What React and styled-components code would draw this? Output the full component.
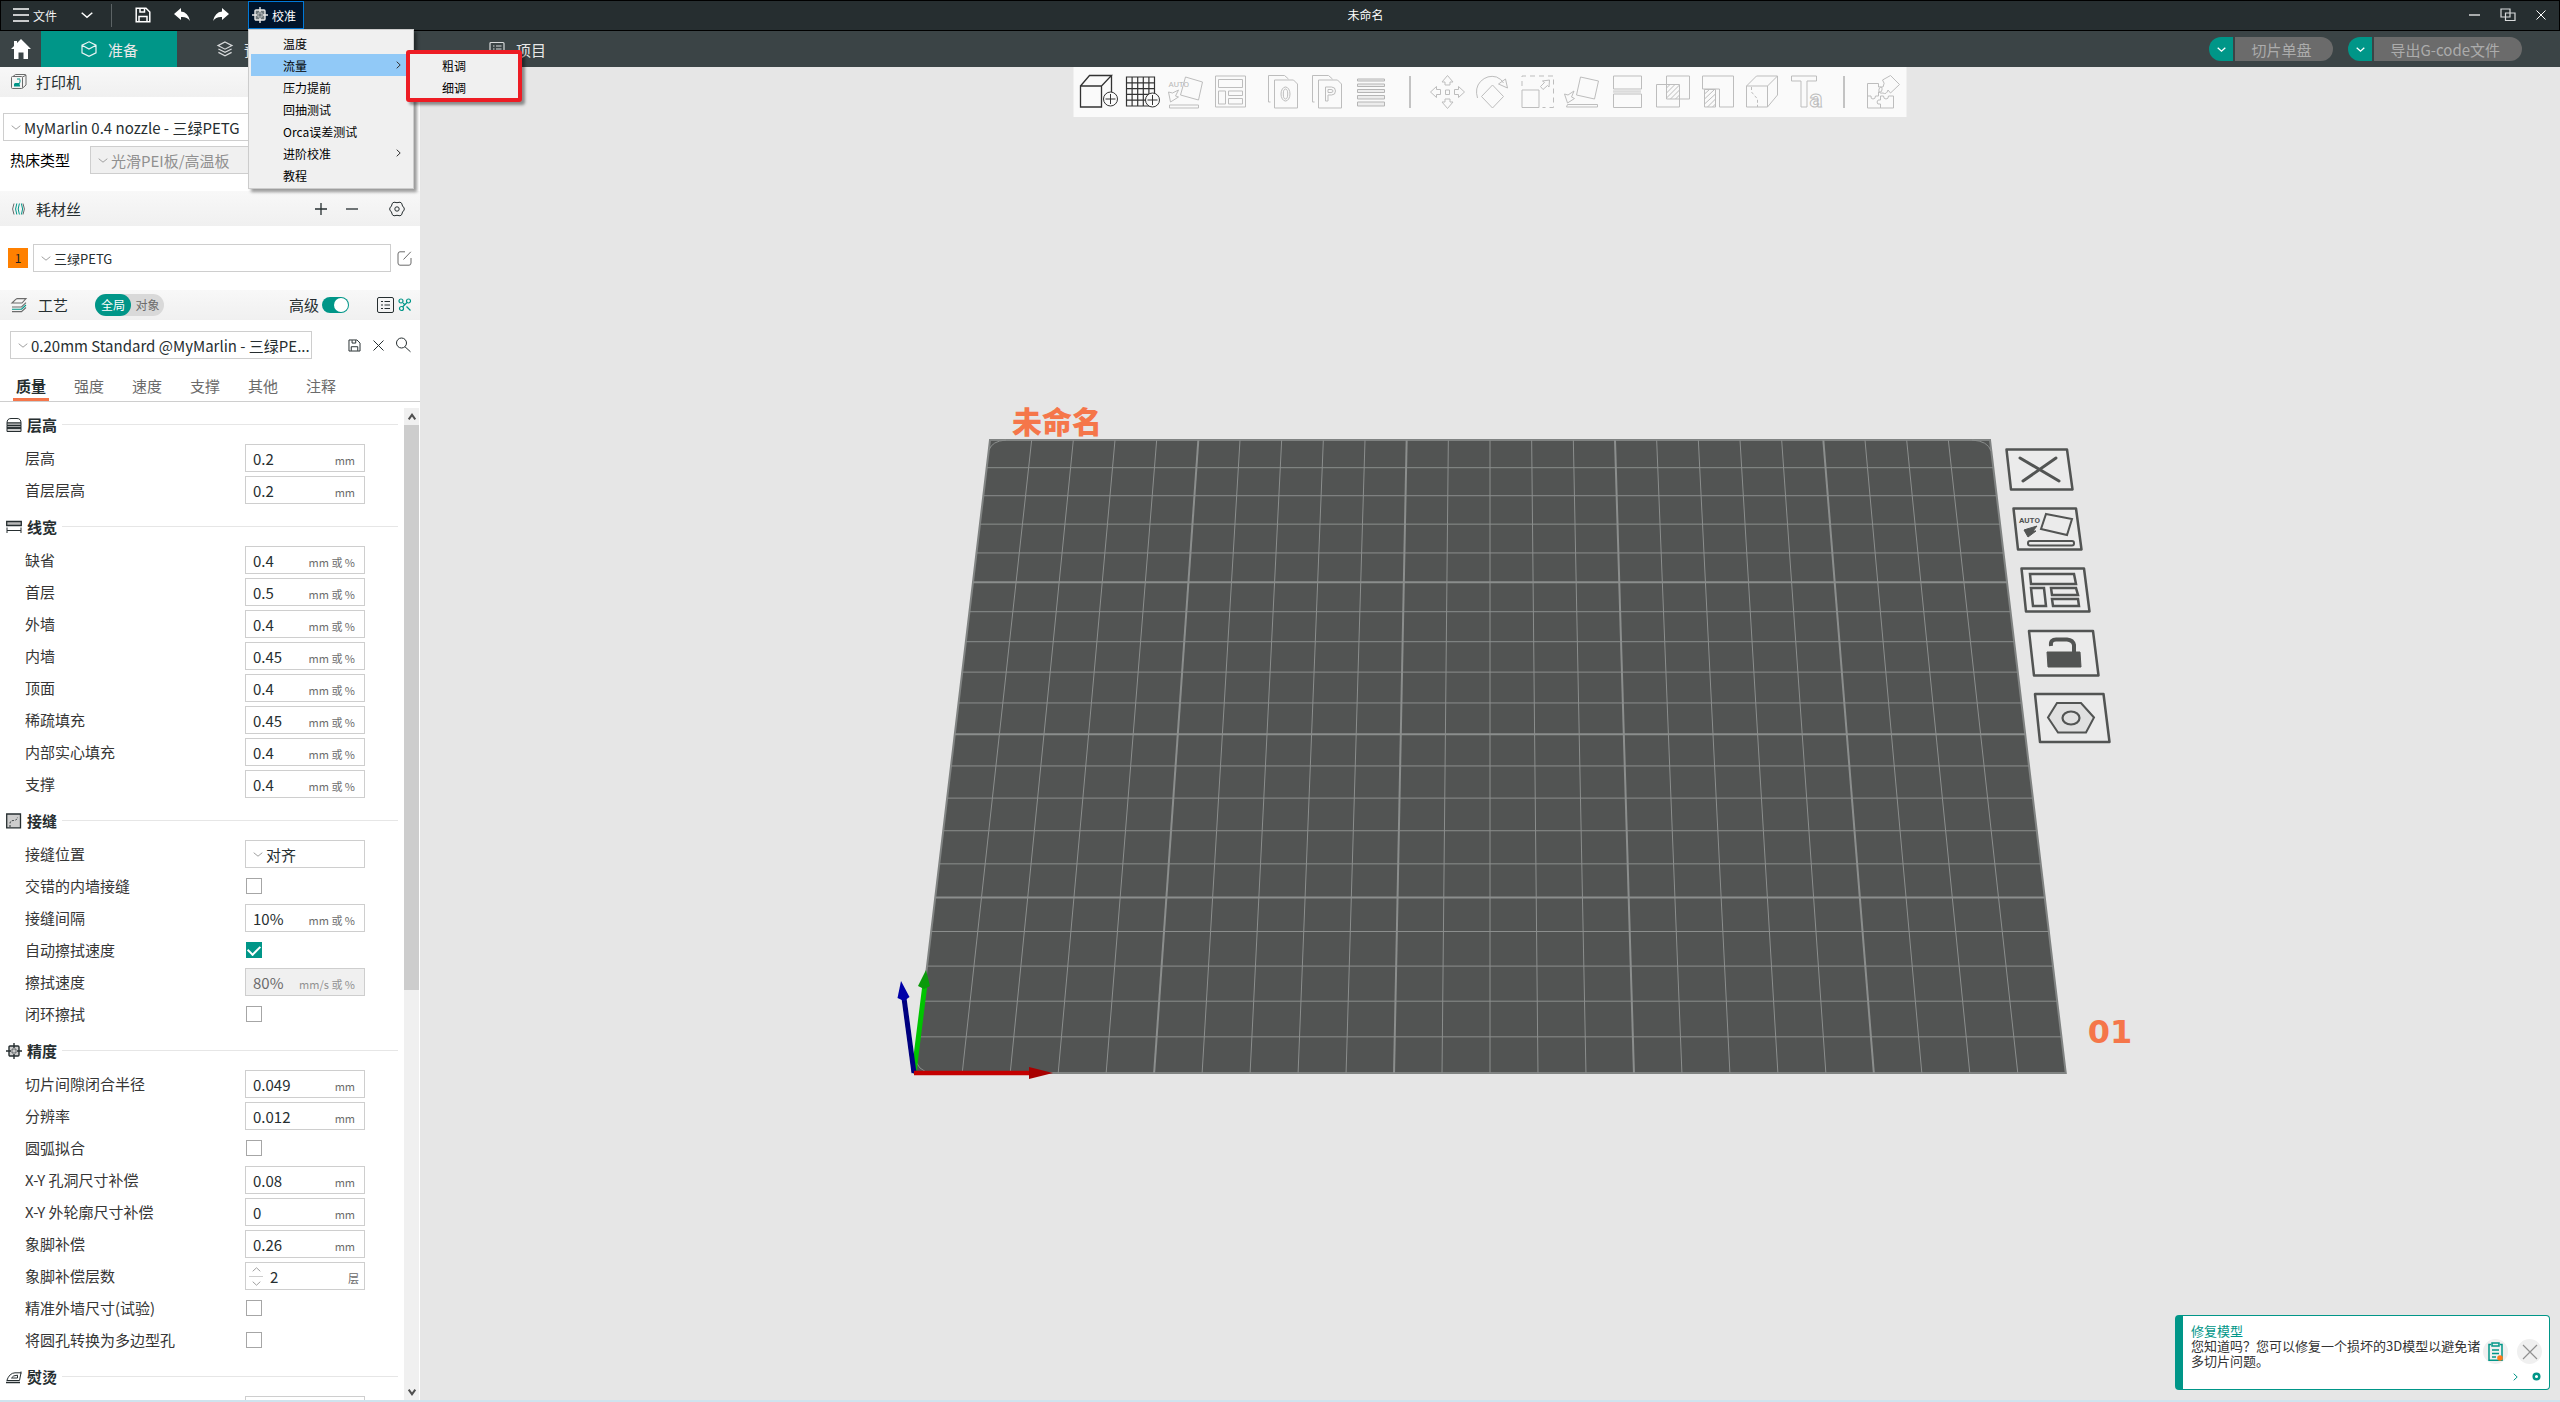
import React from "react";
import styled, { createGlobalStyle, css } from "styled-components";

const C = {
  teal: "#009688",
  bar: "#262e30",
  tabs: "#3b4446",
  ink: "#262e30",
  label: "#363636",
  line: "#cecece",
  orange: "#f5764a",
};

const GlobalStyle = createGlobalStyle`
  * { box-sizing: border-box; }
  body { margin: 0; }
  body, button, input, select {
    font-family: "Noto Sans CJK SC", "Noto Sans", sans-serif;
  }
  button, input, select { margin: 0; padding: 0; border: 0; background: none; color: inherit; font-size: inherit; }
  svg { display: block; flex: none; overflow: visible; }
`;

const Page = styled.div`
  display: flex;
  flex-direction: column;
  height: 100vh;
  overflow: hidden;
  background: #e6e6e6;
  color: ${C.ink};
  font-size: 15px;
  line-height: 22px;
`;

/* ---------- title bar ---------- */

const TitleBar = styled.header`
  display: flex;
  align-items: flex-start;
  height: 31px;
  padding: 0 13px 0 12px;
  background: ${C.bar};
  border: 1px solid #000;
  color: #fff;
  font-size: 12px;
  line-height: 18px;
`;
const BarButton = styled.button`
  display: flex;
  align-items: center;
  gap: 4px;
  height: 28px;
  margin-right: ${(p) => p.$after || 0}px;
  color: #f2f2f2;
`;
const BarDivider = styled.span`
  width: 1px;
  height: 23px;
  margin: 3px 23px 0 0;
  background: #5c6365;
`;
const CalibrationAnchor = styled.div`
  position: relative;
`;
const CalibrationButton = styled.button`
  display: flex;
  align-items: center;
  gap: 4px;
  width: 56px;
  height: 28px;
  padding-left: 3px;
  background: #00142b;
  border: 1px solid #0078d7;
  color: #fff;
`;
const WindowTitle = styled.h1`
  flex: 1;
  margin: 0;
  padding: 5px 42px 0 0;
  text-align: center;
  font-size: 12px;
  font-weight: 400;
`;
const WindowButtons = styled.div`
  display: flex;
  align-items: center;
  gap: 20px;
`;

/* ---------- menus ---------- */

const menuSurface = css`
  position: absolute;
  margin: 0;
  list-style: none;
  background: #f0f0f0;
  color: #000;
  font-size: 12px;
  box-shadow: 3px 3px 3px rgba(0, 0, 0, 0.4);
`;
const Menu = styled.ul`
  ${menuSurface}
  z-index: 10;
  top: 28px;
  left: 0;
  width: 166px;
  padding: 2px;
  border: 1px solid #ccc;
`;
const SubMenu = styled.ul`
  ${menuSurface}
  z-index: 11;
  top: -4px;
  left: 155px;
  width: 116px;
  padding: 0;
  border: 4px solid #ed1c24;
  border-radius: 3px;
`;
const MenuEntry = styled.li`
  position: relative;
`;
const MenuButton = styled.button`
  display: flex;
  align-items: center;
  justify-content: space-between;
  width: 100%;
  height: 22px;
  padding: 0 10px 0 32px;
  background: ${(p) => (p.$open ? "#91c9f7" : "transparent")};
  color: #000;
`;

/* ---------- tab bar ---------- */

const TabBar = styled.nav`
  display: flex;
  align-items: stretch;
  height: 36px;
  padding-right: 38px;
  background: ${C.tabs};
  color: #e8e8e8;
`;
const HomeButton = styled.button`
  display: grid;
  place-items: center;
  width: 41px;
`;
const MainTab = styled.button`
  display: flex;
  align-items: center;
  gap: 11px;
  width: 136px;
  padding-left: 40px;
  background: ${(p) => (p.$active ? C.teal : "transparent")};
`;
const SplitButtons = styled.div`
  display: flex;
  align-items: center;
  gap: 15px;
  margin-left: auto;
`;
const SplitButton = styled.div`
  display: flex;
  gap: 2px;
  height: 24px;
`;
const SplitArrow = styled.button`
  display: grid;
  place-items: center;
  width: 24px;
  background: ${C.teal};
  border-radius: 12px 0 0 12px;
`;
const SplitMain = styled.button`
  padding: 0 22px 0 16px;
  background: #6b6b6b;
  border-radius: 0 12px 12px 0;
  color: #acacac;
`;

/* ---------- sidebar ---------- */

const Body = styled.div`
  display: flex;
  flex: 1;
  min-height: 0;
`;
const Sidebar = styled.aside`
  display: flex;
  flex-direction: column;
  flex: none;
  width: 420px;
  background: #fff;
`;
const PanelHeader = styled.div`
  display: flex;
  align-items: center;
  flex: none;
  height: ${(p) => (p.$tall ? 35 : 30)}px;
  padding: 0 ${(p) => (p.$tall ? 15 : 8)}px 0 11px;
  background: linear-gradient(#f8f8f8, #f0f0f0);
`;
const PanelTitle = styled.h2`
  margin: 0 auto 0 ${(p) => p.$gap || 9}px;
  font-size: 15px;
  font-weight: 400;
`;
const IconButton = styled.button`
  display: grid;
  place-items: center;
  margin-left: ${(p) => p.$gap || 0}px;
`;
const PrinterPanel = styled.div`
  display: flex;
  flex-direction: column;
  gap: 5px;
  padding: 16px 8px 17px 3px;
`;
const BedRow = styled.div`
  display: flex;
  align-items: center;
  padding-left: 7px;
`;
const BedLabel = styled.label`
  width: 80px;
  color: #000;
`;
const SelectBox = styled.div`
  display: flex;
  align-items: center;
  gap: 3px;
  flex: ${(p) => (p.$width ? "none" : 1)};
  width: ${(p) => (p.$width ? p.$width + "px" : "auto")};
  height: 28px;
  padding-left: 7px;
  background: ${(p) => (p.$muted ? "#f0f0f0" : "#fff")};
  border: 1px solid ${C.line};
  color: ${(p) => (p.$muted ? "#909090" : C.ink)};
`;
const Select = styled.select`
  flex: 1;
  min-width: 0;
  height: 26px;
  appearance: none;
  opacity: 1;
  font-size: ${(p) => p.$size || 15}px;
`;
const FilamentRow = styled.div`
  display: flex;
  align-items: center;
  padding: 18px 8px;
`;
const FilamentSwatch = styled.button`
  width: 20px;
  height: 20px;
  margin-right: 5px;
  background: #ff8000;
  color: #222;
  font-size: 12px;
  line-height: 20px;
`;
const ScopeSwitch = styled.div`
  display: flex;
  height: 22px;
  margin-right: 125px;
  background: #d9d9d9;
  border-radius: 11px;
`;
const ScopeButton = styled.button`
  width: ${(p) => (p.$active ? 36 : 33)}px;
  background: ${(p) => (p.$active ? C.teal : "transparent")};
  border-radius: 11px;
  color: ${(p) => (p.$active ? "#fff" : "#6b6b6b")};
  font-size: 12px;
  line-height: 22px;
`;
const AdvancedToggle = styled.input`
  appearance: none;
  display: flex;
  width: 27px;
  height: 16px;
  margin-left: 3px;
  padding: 1px;
  background: ${C.teal};
  border-radius: 8px;
  &::after {
    content: "";
    width: 14px;
    height: 14px;
    margin-left: auto;
    background: #fff;
    border-radius: 7px;
  }
`;
const PresetRow = styled.div`
  display: flex;
  align-items: center;
  padding: 11px 9px 11px 10px;
`;
const SettingTabs = styled.div`
  display: flex;
  flex: none;
  gap: 22px;
  padding-left: 13px;
  border-bottom: 1px solid ${C.line};
`;
const SettingTab = styled.button`
  width: 36px;
  height: 31px;
  color: ${(p) => (p.$active ? C.ink : "#6b6b6b")};
  font-weight: ${(p) => (p.$active ? 700 : 400)};
  box-shadow: ${(p) => (p.$active ? "inset 0 -3px " + C.orange : "none")};
`;

const SettingsArea = styled.div`
  display: flex;
  flex: 1;
  min-height: 0;
`;
const SettingsList = styled.div`
  flex: 1;
  overflow: hidden;
  padding: 2px 6px 0;
`;
const GroupTitle = styled.h3`
  display: flex;
  align-items: center;
  gap: 5px;
  height: 38px;
  margin: 0;
  padding-top: 3px;
  font-size: 15px;
  font-weight: 700;
  &::after {
    content: "";
    flex: 1;
    height: 1px;
    background: #e6e6e6;
  }
`;
const SettingRow = styled.div`
  display: flex;
  align-items: center;
  height: 32px;
  padding-left: 19px;
`;
const SettingLabel = styled.label`
  width: 220px;
  color: ${C.label};
`;
const Field = styled.div`
  display: flex;
  align-items: center;
  width: 120px;
  height: 28px;
  padding: 0 ${(p) => (p.$spin ? 5 : 9)}px 0 ${(p) => (p.$spin ? 3 : 7)}px;
  background: ${(p) => (p.$muted ? "#f0f0f0" : "#fff")};
  border: 1px solid ${C.line};
  color: ${(p) => (p.$muted ? "#6b6b6b" : C.ink)};
`;
const FieldInput = styled.input`
  flex: 1;
  min-width: 0;
  height: 24px;
`;
const Unit = styled.span`
  padding-top: 3px;
  color: ${(p) => (p.$muted ? "#909090" : "#6b6b6b")};
  font-size: 11px;
  white-space: nowrap;
`;
const Spinner = styled.div`
  display: flex;
  flex-direction: column;
  margin-right: 7px;
`;
const SpinButton = styled.button`
  display: grid;
  place-items: center;
  width: 14px;
  height: 13px;
  & + & { border-top: 1px solid ${C.line}; }
`;
const CheckBox = styled.input`
  appearance: none;
  display: grid;
  place-items: center;
  width: 16px;
  height: 16px;
  margin-left: 1px;
  border: 1px solid #a6a6a6;
  background: #fff;
  &:checked {
    background: ${C.teal};
    border-color: ${C.teal};
  }
  &:checked::after {
    content: "";
    width: 10px;
    height: 6px;
    margin-bottom: 3px;
    border: solid #fff;
    border-width: 0 0 2px 2px;
    transform: rotate(-45deg);
  }
`;
const ScrollTrack = styled.div`
  display: flex;
  flex-direction: column;
  width: 15px;
  margin: 6px 1px 0 0;
  background: #f0f0f0;
`;
const ScrollArrow = styled.button`
  display: grid;
  place-items: center;
  flex: none;
  height: 17px;
`;
const ScrollRun = styled.div`
  flex: 1;
`;
const ScrollThumb = styled.div`
  height: 59%;
  background: #cdcdcd;
`;

/* ---------- viewport ---------- */

const Viewport = styled.main`
  position: relative;
  flex: 1;
  min-width: 0;
  background: #e6e6e6;
`;
const Scene = styled.svg`
  width: 100%;
  height: 100%;
`;
const ObjectToolbar = styled.div`
  position: absolute;
  top: 0;
  left: 50%;
  transform: translateX(-50%);
  display: flex;
  align-items: center;
  height: 50px;
  padding: 0 3px;
  background: #fafafa;
`;
const ToolGroup = styled.div`
  display: flex;
  margin-left: ${(p) => p.$gap || 0}px;
`;
const ToolButton = styled.button`
  display: grid;
  place-items: center;
  width: ${(p) => (p.$wide ? 45 : 44)}px;
  height: 50px;
`;
const ToolDivider = styled.span`
  width: 1px;
  height: 32px;
  margin-left: ${(p) => p.$gap}px;
  background: #8c8c8c;
`;
const Toast = styled.section`
  position: absolute;
  right: 10px;
  bottom: 10px;
  display: flex;
  gap: 2px;
  width: 375px;
  height: 75px;
  padding: 7px 7px 0 8px;
  background: #fff;
  border: 1px solid ${C.teal};
  border-left-width: 8px;
  border-radius: 4px;
  font-size: 13px;
  line-height: 15px;
`;
const ToastText = styled.div`
  flex: none;
  width: 290px;
  color: #333;
`;
const ToastTitle = styled.h2`
  margin: 0;
  color: ${C.teal};
  font-size: 13px;
  font-weight: 400;
`;
const ToastBody = styled.p`
  margin: 0;
`;
const ToastActions = styled.div`
  flex: 1;
  padding-top: 16px;
`;
const ActionRow = styled.div`
  display: flex;
  justify-content: flex-end;
  gap: 9px;
`;
const RoundButton = styled.button`
  display: grid;
  place-items: center;
  width: ${(p) => (p.$small ? 12 : 25)}px;
  height: 25px;
  background: ${(p) => (p.$small ? "none" : "#f0f0f0")};
  border-radius: 13px;
`;
const BottomStrip = styled.div`
  height: 2px;
  background: #cfe3ee;
`;

/* ---------- icons ---------- */

const Ico = ({ w = 16, h = 16, box, s = C.ink, sw = 1, children }) => (
  <svg width={w} height={h} viewBox={box || `0 0 ${w} ${h}`} fill="none" stroke={s} strokeWidth={sw} aria-hidden="true">
    {children}
  </svg>
);
const Chevron = ({ w = 10, h = 5, s = "#a0a0a0", sw = 1, dir = "down" }) => (
  <Ico w={w} h={h} s={s} sw={sw}>
    {dir === "down" && <path d={`M.7 .7L${w / 2} ${h - 0.8}L${w - 0.7} .7`} />}
    {dir === "up" && <path d={`M.7 ${h - 0.7}L${w / 2} .8L${w - 0.7} ${h - 0.7}`} />}
    {dir === "right" && <path d={`M.7 .7L${w - 0.8} ${h / 2}L.7 ${h - 0.7}`} />}
  </Ico>
);
const PrecisionIcon = ({ s = C.ink, fill = "#cdcdcd" }) => (
  <Ico s={s} sw={1.4}>
    <rect x="3" y="3" width="10" height="10" rx="1" fill={fill} />
    <path d="M8 0v5M8 11v5M0 8h5M11 8h5" />
    <path d="M6 6h4v4H6z" strokeWidth=".6" />
  </Ico>
);
const CubeIcon = () => (
  <Ico s="#e8f4f3" sw={1.2}>
    <path d="M8 .8L15 4.2V11.8L8 15.3L1 11.8V4.2zM1 4.2L8 8L15 4.2" />
  </Ico>
);
const LayersIcon = () => (
  <Ico s="#d8dadb" sw={1.2}>
    <path d="M8 1L15 4.6L8 8.2L1 4.6zM1.4 8L8 11.4L14.6 8M1.4 11.4L8 14.8L14.6 11.4" />
  </Ico>
);
const DeviceIcon = () => (
  <Ico s="#d8dadb"><path d="M1.5 2.5h13v9h-13zM5 14.5h6" /></Ico>
);
const ProjectIcon = () => (
  <Ico s="#d8dadb" sw={1.2}>
    <rect x="1" y="1.5" width="14" height="13" rx="1" />
    <path d="M4 5h1.5M7 5h5.5M4 8h1.5M7 8h5.5M4 11h1.5M7 11h5.5" />
  </Ico>
);
const PrinterIcon = () => (
  <Ico s="#6b6b6b">
    <rect x=".5" y="2.5" width="11" height="12" rx="1" />
    <path d="M2 2.5L4.5 .5H14a1 1 0 0 1 1 1V11l-3.5 3.2M11.5 3L15 1.2" />
    <path d="M3 12h6M3.5 9.5h5L9 7.5V5.5M6 5h3" stroke={C.teal} />
    <path d="M3 10h5.5l.5 2H3z" fill={C.teal} stroke="none" />
  </Ico>
);
const SpoolIcon = () => (
  <Ico s="#6b6b6b">
    <path d="M3 2.500Q.2 8 3 13.500M12 2.500q2.800 5.500 0 11" />
    <path d="M5.800 2.500Q3.400 8 5.800 13.500M8.400 2.500Q6 8 8.400 13.500M10.400 2.500Q12.800 8 10.400 13.500" stroke={C.teal} />
  </Ico>
);
const ProcessIcon = () => (
  <Ico s="#6b6b6b" sw={1.1}>
    <path d="M1 6L5 2.2Q5.6 1.6 6.4 1.6H15L11 6zM1 10h9.5L15 5.6" />
    <path d="M1 12.2h9.5L15 8" stroke={C.teal} />
    <path d="M1 14.6h9.5L15 10.5" />
  </Ico>
);
const HexGear = ({ w = 16 }) => (
  <Ico w={w} h={w} box="0 0 16 16">
    <path d="M5 1.200Q8 2.200 11 1.200L12.600 2.200Q13.200 5.400 15.200 7V9Q13.200 10.600 12.600 13.800L11 14.800Q8 13.800 5 14.800L3.400 13.800Q2.800 10.600 .8 9V7Q2.800 5.400 3.400 2.200z" />
    <circle cx="8" cy="8" r="2.200" />
  </Ico>
);
const SaveIcon = ({ w = 16, s = "#fff", sw = 1.5 }) => (
  <Ico w={w} h={w} box="0 0 16 16" s={s} sw={sw}>
    <path d="M1.200 1.200H11L14.800 5V14.800H1.200zM4 14.500V9.500h8v5M5 1.500v3.500h4.500V1.500" />
  </Ico>
);

const groupIcons = {
  height: (
    <Ico>
      <path d="M1 6Q1 1.500 5 1.500h6Q15 1.500 15 6z" />
      <path d="M1 6h14v2.500H1zM1 8.500h14V11H1zM1 11h14v3.500H1z" fill="#cdcdcd" />
      <path d="M1 8.500h14M1 11h14" strokeWidth="1.600" />
    </Ico>
  ),
  width: (
    <Ico>
      <path d="M.7 2.500h14.600v4H.7z" fill="#b8b8b8" strokeWidth="1.300" />
      <path d="M1 8.500v5.500M15 8.500v5.500M1 11.500h14" />
    </Ico>
  ),
  seam: (
    <Ico>
      <path d="M.7 1h13.800v13.800H.7z" fill="#cdcdcd" strokeWidth="1.300" />
      <path d="M4 14V11Q4 7.500 7.500 7.500Q11 7.500 11.500 4" strokeDasharray="2 1.500" />
    </Ico>
  ),
  precision: <PrecisionIcon />,
  ironing: (
    <Ico>
      <path d="M.8 11.500Q3.500 4 9 3.800H15L13.500 11.500zM15 2.500v2M5.500 9Q7 6.200 11.500 6.200V9z" />
      <path d="M0 13.500h14" strokeWidth="1.500" />
    </Ico>
  ),
};

const Tool = ({ s = "#bdbdbd", children }) => (
  <Ico w={38} h={36} s={s}>{children}</Ico>
);
const dark = "#333";
const tools = {
  add: ["添加模型", (
    <Tool s={dark}>
      <path d="M1 12h21v21H1zM1 12L10 1.500h22L22 12M32 1.500V18" strokeWidth="1.300" />
      <circle cx="31" cy="25" r="7" fill="#fafafa" />
      <path d="M31 20v10M26 25h10" />
    </Tool>
  )],
  plate: ["添加盘", (
    <Tool s={dark}>
      <path d="M3 3h28v29H3zM8.600 3v29M14.200 3v29M19.800 3v29M25.400 3v29M3 8.800h28M3 14.600h28M3 20.400h28M3 26.200h28" strokeWidth="1.200" />
      <circle cx="29" cy="26" r="7" fill="#fafafa" />
      <path d="M29 21v10M24 26h10" />
    </Tool>
  )],
  orient: ["自动朝向", (
    <Tool>
      <text x="1" y="13" fontSize="8" fontFamily="Roboto, sans-serif" fill="#b5b5b5" stroke="none">AUTO</text>
      <path d="M18 3L35 8L31 26L13 21zM2 31h29v3H2zM1 18L3 28L11 23L8 22L11 16L5 19z" />
    </Tool>
  )],
  arrange: ["自动摆放", (
    <Tool>
      <path d="M4 2h30v31H4zM7 5.500h24v8H7zM7 17h7v13H7zM17 17h14v4.500H17zM17 24.500h14V30H17z" />
    </Tool>
  )],
  objects: ["拆分为对象", (
    <Tool>
      <path d="M6 28H4V1.500h16L24 5" />
      <path d="M10 6h19L33 10V34H10z" />
      <ellipse cx="21" cy="20" rx="4.500" ry="7" />
      <ellipse cx="21" cy="20" rx="2.200" ry="5" />
    </Tool>
  )],
  parts: ["拆分为零件", (
    <Tool>
      <path d="M6 28H4V1.500h16L24 5" />
      <path d="M10 6h19L33 10V34H10z" />
      <path d="M17 27V13h6q4 0 4 4t-4 4h-3.500v6zM19.500 15.500h3q2 0 2 1.500t-2 1.500h-3z" />
    </Tool>
  )],
  layers: ["可变层高", (
    <Tool>
      <path d="M5 5h27v2H5zM5 10h27v2.500H5zM5 15.500h27v3H5zM5 21.500h27v3.500H5zM5 28h27v4H5z" fill="#ececec" stroke="#b5b5b5" />
    </Tool>
  )],
  move: ["移动", (
    <Tool>
      <path d="M19 1.500L24.500 8H21.500V11h-5V8H13.500zM19 34.500L24.500 28H21.500V25h-5v3H13.500zM2 18L8 12.500v3h4v5H8v3zM36 18L30 12.500v3h-4v5h4v3zM17 16h4v4.500h-4z" />
    </Tool>
  )],
  rotate: ["旋转", (
    <Tool>
      <path d="M19 11L30 22.500L19 34L8 22.500z" />
      <path d="M4 24Q1 14 7 7.500Q14 .5 23 3Q28 5 30 9M25 10L32 5L34 14z" />
    </Tool>
  )],
  scale: ["缩放", (
    <Tool>
      <path d="M3.500 16h17v17.500h-17z" />
      <path d="M3.500 12V2H35V33.500H24" strokeDasharray="5 4" />
      <path d="M22 12.500L26 8.500L24 7L31 6L30.500 13L29 11.500L24.500 15.500z" />
    </Tool>
  )],
  place: ["底面选择", (
    <Tool>
      <path d="M17 3L35 7L31 25L13 21zM4 30.500h30v2.500H3zM1 20L4 29L11 24.500L8 23L10.500 17L4.500 21z" />
    </Tool>
  )],
  cut: ["切割", (
    <Tool>
      <path d="M5 2h28v13H5zM5 20h28v13.500H5z" />
      <path d="M5 17.500h28" strokeWidth="2.500" strokeDasharray="1 1" />
    </Tool>
  )],
  bool: ["网格布尔", (
    <Tool>
      <path d="M13 2h23v23H13zM3 10.500h23V33H3z" />
      <path d="M13 14l3.500-3.500M13 19l8.500-8.500M13 24L26 11M17 25l9-9M22 25l4-4" />
    </Tool>
  )],
  support: ["支撑绘制", (
    <Tool>
      <path d="M4 2h31v31H21V15H4z" />
      <path d="M6 15.500h11V33H6zM6 20l5-4.500M6 25l10-9.500M6 30l11-10M9 33l8-8M14 33l3-3" />
    </Tool>
  )],
  seam: ["Z缝绘制", (
    <Tool>
      <path d="M3 12h21v21H3zM3 12L13 2h21L24 12M34 2v19L24 33" />
      <path d="M8 13v5L14 25v8" strokeDasharray="3 2" />
    </Tool>
  )],
  text: ["文字浮雕", (
    <Tool>
      <path d="M3 2h25v5H18.500V33h-6V7H3z" />
      <text x="21" y="33" fontSize="24" fontFamily="Roboto, sans-serif" fontWeight="700">a</text>
    </Tool>
  )],
  assembly: ["装配视图", (
    <Tool>
      <path d="M5 9.500H16V13Q20 12 19.500 16Q19 19 16 18V22H13Q13 25 10.500 25Q8 25 8.500 22H5zM5 22v12h13M18 34v-4Q14.500 31 14.500 28Q15 25 18 26V22h3q0 3 2.500 3t2.500-3H31V34z" />
      <path d="M20 6L28 1.500L37 10.500L28 19L25.500 16Q24 21 20.500 19Q15.500 20 16.500 15Q17.500 12 20.500 13Q23 9 20 6z" />
    </Tool>
  )],
};

/* ---------- build plate scene ---------- */

const HORIZON = -3738;
const DEPTH = 4811;
const project = (u, v) => {
  const d = 1 + 0.1515 * v;
  return [1490 + ((u - 0.5) * 1151.5) / d, HORIZON + DEPTH / d];
};
const columns = Array.from({ length: 23 }, (_, i) => i + 1);
const rows = Array.from({ length: 19 }, (_, i) => i + 1);
const edge = (a, b) => ({ x1: a[0], y1: a[1], x2: b[0], y2: b[1] });

const PlateButton = ({ corners, label, children }) => (
  <g aria-label={label}>
    <polygon points={corners} fill="#ebebeb" strokeWidth="2.500" strokeLinejoin="round" />
    {children}
  </g>
);

const BuildPlate = () => {
  const outline = [project(0, 0), project(0, 1), project(1, 1), project(1, 0)];
  return (
    <Scene viewBox="420 67 2140 1333" preserveAspectRatio="xMidYMid meet" role="img" aria-label="打印盘">
      <polygon points={outline.map((p) => p.join(",")).join(" ")} fill="#525453" stroke="#808382" strokeWidth="2" />
      <g stroke="#8b8e8d" fill="none">
        {columns.map((i) => (
          <line key={i} {...edge(project(i / 24, 0), project(i / 24, 1))} strokeWidth={i % 5 ? 1 : 2} />
        ))}
        {rows.map((i) => (
          <line key={i} {...edge(project(0, i / 20), project(1, i / 20))} strokeWidth={i % 5 ? 1 : 2} />
        ))}
        <path d="M989 450Q992 441 1006 440M1972 440Q1988 441 1991 451M916 1062Q919 1069 926 1072" />
      </g>
      <g fill={C.orange} fontWeight="900" textAnchor="middle">
        <text x="1057" y="433" fontSize="30">未命名</text>
        <text x="2110" y="1043" fontSize="32" fontFamily="DejaVu Sans">01</text>
      </g>
      <g>
        <path d="M914 1072L925 984" stroke="#00c400" strokeWidth="5" />
        <path d="M926 970L930 986L924 989L918 986z" fill="#0a9a0a" />
        <path d="M914 1073L904 998" stroke="#00007f" strokeWidth="5" />
        <path d="M901 981L909.500 997L904 1001L897.500 998z" fill="#0000a8" />
        <path d="M914 1073H1030" stroke="#c40000" strokeWidth="4.500" />
        <path d="M1029 1067L1053 1073L1029 1079z" fill="#a80000" />
      </g>
      <g stroke="#525453" fill="none">
        <PlateButton label="删除" corners="2006.500,449.500 2067,449.500 2072.500,489.500 2011,489.500">
          <path d="M2020 458L2059 481M2056 458L2023 481" strokeWidth="3" strokeLinecap="round" />
        </PlateButton>
        <PlateButton label="自动朝向" corners="2013.500,508.500 2076,508.500 2081.500,549.500 2018,549.500">
          <path d="M2046 514L2072 519L2067 535L2041 529z" strokeWidth="2" />
          <rect x="2028" y="541" width="46" height="4.500" rx="2" strokeWidth="2" />
          <path d="M2024 530L2028 537L2036 531L2033 531L2037 526L2027 529z" fill="#525453" />
          <text x="2019" y="523" fontSize="8" fontFamily="Roboto, sans-serif" fontWeight="700" fill="#525453" stroke="none">AUTO</text>
        </PlateButton>
        <PlateButton label="自动摆放" corners="2021.500,568.500 2084,568.500 2089.500,611.500 2026,611.500">
          <path d="M2030 574h44l2 10h-45zM2031 588h13l2 18h-13zM2051 588h25l2 7h-26zM2052 599h26l1 7h-26z" strokeWidth="2.500" />
        </PlateButton>
        <PlateButton label="解锁" corners="2029,631 2093,631 2098.500,675.500 2034,675.500">
          <path d="M2047 652h33l1 15h-33z" fill="#525453" />
          <path d="M2051 646Q2050 639 2057 639.500H2067Q2073 640 2074 645V653" strokeWidth="4" />
        </PlateButton>
        <PlateButton label="盘设置" corners="2035,694 2103.500,694 2109.500,742 2040,742">
          <path d="M2057 703h24l13 14.500l-8 15h-28l-10-15z" fill="#e0e0e0" strokeWidth="2" />
          <ellipse cx="2071" cy="718" rx="8.500" ry="6.500" strokeWidth="2.200" />
        </PlateButton>
      </g>
    </Scene>
  );
};

/* ---------- data ---------- */

const mmp = "mm 或 %";
const groups = [
  ["height", "层高", [
    ["层高", "0.2", "mm"],
    ["首层层高", "0.2", "mm"],
  ]],
  ["width", "线宽", [
    ["缺省", "0.4", mmp],
    ["首层", "0.5", mmp],
    ["外墙", "0.4", mmp],
    ["内墙", "0.45", mmp],
    ["顶面", "0.4", mmp],
    ["稀疏填充", "0.45", mmp],
    ["内部实心填充", "0.4", mmp],
    ["支撑", "0.4", mmp],
  ]],
  ["seam", "接缝", [
    ["接缝位置", "对齐", "select"],
    ["交错的内墙接缝", false],
    ["接缝间隔", "10%", mmp],
    ["自动擦拭速度", true],
    ["擦拭速度", "80%", "mm/s 或 %", "muted"],
    ["闭环擦拭", false],
  ]],
  ["precision", "精度", [
    ["切片间隙闭合半径", "0.049", "mm"],
    ["分辨率", "0.012", "mm"],
    ["圆弧拟合", false],
    ["X-Y 孔洞尺寸补偿", "0.08", "mm"],
    ["X-Y 外轮廓尺寸补偿", "0", "mm"],
    ["象脚补偿", "0.26", "mm"],
    ["象脚补偿层数", "2", "层", "spin"],
    ["精准外墙尺寸(试验)", false],
    ["将圆孔转换为多边型孔", false],
  ]],
  ["ironing", "熨烫", [["", "", "select"]]],
];

const Dropdown = ({ id, label, value, width, muted, size }) => (
  <SelectBox $width={width} $muted={muted}>
    <Chevron />
    <Select id={id} aria-label={label} $size={size} defaultValue={value}>
      <option>{value}</option>
    </Select>
  </SelectBox>
);

const Setting = ({ id, item }) => {
  const [label, value, unit, kind] = item;
  const muted = kind === "muted";
  const spin = kind === "spin";
  let control;
  if (typeof value === "boolean") control = <CheckBox id={id} type="checkbox" defaultChecked={value} />;
  else if (unit === "select") control = <Dropdown id={id} value={value} width={120} />;
  else
    control = (
      <Field $muted={muted} $spin={spin}>
        {spin && (
          <Spinner>
            <SpinButton aria-label="增加"><Chevron w={9} dir="up" /></SpinButton>
            <SpinButton aria-label="减少"><Chevron w={9} /></SpinButton>
          </Spinner>
        )}
        <FieldInput id={id} defaultValue={value} readOnly={muted} />
        <Unit $muted={muted}>{unit}</Unit>
      </Field>
    );
  return (
    <SettingRow>
      <SettingLabel htmlFor={id}>{label}</SettingLabel>
      {control}
    </SettingRow>
  );
};

const menuItems = ["温度", "流量", "压力提前", "回抽测试", "Orca误差测试", "进阶校准", "教程"];

const ToolSet = ({ names, wide, gap }) => (
  <ToolGroup $gap={gap}>
    {names.map((n) => (
      <ToolButton key={n} $wide={wide} aria-label={tools[n][0]}>{tools[n][1]}</ToolButton>
    ))}
  </ToolGroup>
);

export default function App() {
  return (
    <Page>
      <GlobalStyle />
      <TitleBar>
        <BarButton $after={24}>
          <Ico s="#fff" sw={1.3}><path d="M0 2h16M0 8h16M0 14h16" /></Ico>
          文件
        </BarButton>
        <BarButton $after={18} aria-label="更多"><Chevron w={12} h={6} s="#fff" sw={1.5} /></BarButton>
        <BarDivider />
        <BarButton $after={23} aria-label="保存"><SaveIcon /></BarButton>
        <BarButton $after={23} aria-label="撤销">
          <Ico h={14} s="none"><path fill="#fff" d="M0 6L7 0V3.500Q14 4 16 13Q13 8.500 7 9V12z" /></Ico>
        </BarButton>
        <BarButton $after={19} aria-label="重做">
          <Ico h={14} s="none"><path fill="#fff" d="M16 6L9 0V3.500Q2 4 0 13Q3 8.500 9 9V12z" /></Ico>
        </BarButton>
        <CalibrationAnchor>
          <CalibrationButton>
            <PrecisionIcon s="#e8e8e8" fill="#6d7679" />
            校准
          </CalibrationButton>
          <Menu>
            {menuItems.map((name) => {
              const open = name === "流量";
              return (
                <MenuEntry key={name}>
                  <MenuButton $open={open}>
                    {name}
                    {(open || name === "进阶校准") && <Chevron w={5} h={8} s="#333" dir="right" />}
                  </MenuButton>
                  {open && (
                    <SubMenu>
                      <MenuEntry><MenuButton>粗调</MenuButton></MenuEntry>
                      <MenuEntry><MenuButton>细调</MenuButton></MenuEntry>
                    </SubMenu>
                  )}
                </MenuEntry>
              );
            })}
          </Menu>
        </CalibrationAnchor>
        <WindowTitle>未命名</WindowTitle>
        <WindowButtons>
          <BarButton aria-label="最小化"><Ico w={11} s="#fff" sw={1.2}><path d="M0 8h11" /></Ico></BarButton>
          <BarButton aria-label="还原">
            <Ico s="#d8dadb" sw={1.2}><path d="M1 2h9v8H1zM5.500 6H15v7.500H5.500z" /></Ico>
          </BarButton>
          <BarButton aria-label="关闭"><Ico w={10} h={10} s="#fff"><path d="M.5 .5l9 9M9.500 .5l-9 9" /></Ico></BarButton>
        </WindowButtons>
      </TitleBar>

      <TabBar>
        <HomeButton aria-label="主页">
          <Ico w={20} h={20} s="none">
            <path fill="#fff" d="M10 0L20 10H17V20H12.500V13.500h-5V20H3V10H0zM3 2h3v3L3 8z" />
          </Ico>
        </HomeButton>
        <MainTab $active><CubeIcon />准备</MainTab>
        <MainTab><LayersIcon />预览</MainTab>
        <MainTab><DeviceIcon />设备</MainTab>
        <MainTab><ProjectIcon />项目</MainTab>
        <SplitButtons>
          {["切片单盘", "导出G-code文件"].map((t) => (
            <SplitButton key={t}>
              <SplitArrow aria-label={t + "选项"}><Chevron w={9} h={5} s="#fff" sw={1.3} /></SplitArrow>
              <SplitMain>{t}</SplitMain>
            </SplitButton>
          ))}
        </SplitButtons>
      </TabBar>

      <Body>
        <Sidebar>
          <PanelHeader>
            <PrinterIcon />
            <PanelTitle>打印机</PanelTitle>
          </PanelHeader>
          <PrinterPanel>
            <Dropdown label="打印机" value="MyMarlin 0.4 nozzle - 三绿PETG" width={389} />
            <BedRow>
              <BedLabel htmlFor="bed">热床类型</BedLabel>
              <Dropdown id="bed" value="光滑PEI板/高温板" muted />
            </BedRow>
          </PrinterPanel>

          <PanelHeader $tall>
            <SpoolIcon />
            <PanelTitle>耗材丝</PanelTitle>
            <IconButton aria-label="添加耗材丝"><Ico w={12} h={12} sw={1.3}><path d="M6 0v12M0 6h12" /></Ico></IconButton>
            <IconButton $gap={19} aria-label="移除耗材丝"><Ico w={12} h={12} sw={1.3}><path d="M0 6h12" /></Ico></IconButton>
            <IconButton $gap={31} aria-label="耗材丝设置"><HexGear w={16} /></IconButton>
          </PanelHeader>
          <FilamentRow>
            <FilamentSwatch>1</FilamentSwatch>
            <Dropdown label="耗材丝" value="三绿PETG" size={13} />
            <IconButton $gap={6} aria-label="编辑耗材丝">
              <Ico w={15} h={15} s="#6b6b6b">
                <path d="M8 .8H3Q1 .8 1 3v9Q1 14.200 3 14.200h9Q14 14.200 14 12V7M6.500 8.500L13.800 .8" />
              </Ico>
            </IconButton>
          </FilamentRow>

          <PanelHeader>
            <ProcessIcon />
            <PanelTitle $gap={11}>工艺</PanelTitle>
            <ScopeSwitch>
              <ScopeButton $active>全局</ScopeButton>
              <ScopeButton>对象</ScopeButton>
            </ScopeSwitch>
            <label htmlFor="advanced">高级</label>
            <AdvancedToggle id="advanced" type="checkbox" defaultChecked />
            <IconButton $gap={28} aria-label="参数列表">
              <Ico w={17}><rect x=".5" y=".5" width="16" height="15" rx="1.500" /><path d="M4 4.500h2M7.500 4.500H13M4 8h2M7.500 8H13M4 11.500h2M7.500 11.500H13" /></Ico>
            </IconButton>
            <IconButton $gap={4} aria-label="比较预设">
              <Ico w={14} h={14} s={C.teal} sw={1.2}>
                <circle cx="3" cy="3" r="2" /><circle cx="10.500" cy="3" r="2" /><circle cx="3.500" cy="10.500" r="2" />
                <path d="M4.500 9L9 4.500M5 5l2 2M8.500 8.500l4 4" />
              </Ico>
            </IconButton>
          </PanelHeader>
          <PresetRow>
            <Dropdown label="工艺预设" value="0.20mm Standard @MyMarlin - 三绿PE..." width={302} />
            <IconButton $gap={36} aria-label="保存预设"><SaveIcon w={13} s={C.ink} sw={1.2} /></IconButton>
            <IconButton $gap={12} aria-label="删除预设"><Ico w={11} h={11}><path d="M.5 .5l10 10M10.500 .5l-10 10" /></Ico></IconButton>
            <IconButton $gap={11} aria-label="搜索">
              <Ico><circle cx="6.500" cy="6" r="5" /><path d="M10 9.800l5.500 5" /></Ico>
            </IconButton>
          </PresetRow>
          <SettingTabs>
            {["质量", "强度", "速度", "支撑", "其他", "注释"].map((t, i) => (
              <SettingTab key={t} $active={i === 0}>{t}</SettingTab>
            ))}
          </SettingTabs>

          <SettingsArea>
            <SettingsList>
              {groups.map(([icon, title, items]) => (
                <section key={icon}>
                  <GroupTitle>{groupIcons[icon]}{title}</GroupTitle>
                  {items.map((item) => (
                    <Setting key={item[0]} id={icon + "-" + item[0]} item={item} />
                  ))}
                </section>
              ))}
            </SettingsList>
            <ScrollTrack>
              <ScrollArrow aria-label="向上滚动"><Chevron w={8} h={6} s="#505050" sw={2} dir="up" /></ScrollArrow>
              <ScrollRun><ScrollThumb /></ScrollRun>
              <ScrollArrow aria-label="向下滚动"><Chevron w={8} h={6} s="#505050" sw={2} /></ScrollArrow>
            </ScrollTrack>
          </SettingsArea>
        </Sidebar>

        <Viewport>
          <BuildPlate />
          <ObjectToolbar>
            <ToolSet names={["add", "plate", "orient", "arrange"]} />
            <ToolSet names={["objects", "parts", "layers"]} gap={9} />
            <ToolDivider $gap={16} />
            <ToolSet names={["move", "rotate", "scale", "place", "cut", "bool", "support", "seam", "text"]} wide gap={14} />
            <ToolDivider $gap={14} />
            <ToolSet names={["assembly"]} wide gap={14} />
          </ObjectToolbar>
          <Toast>
            <ToastText>
              <ToastTitle>修复模型</ToastTitle>
              <ToastBody>您知道吗？您可以修复一个损坏的3D模型以避免诸多切片问题。</ToastBody>
            </ToastText>
            <ToastActions>
              <ActionRow>
                <RoundButton aria-label="查看文档">
                  <Ico w={15} h={19} s={C.teal} sw={1.5}>
                    <path d="M3 2.500H1v15.700h13V2.500h-2M4 1h7v3H4zM4 8h7M4 11.500h7M4 15h4" />
                    <circle cx="12" cy="16" r="2.800" fill="#ff7a1a" stroke="none" />
                  </Ico>
                </RoundButton>
                <RoundButton aria-label="关闭提示"><Ico s="#909090" sw={1.2}><path d="M1 1l14 14M15 1L1 15" /></Ico></RoundButton>
              </ActionRow>
              <ActionRow>
                <RoundButton $small aria-label="下一条"><Chevron w={5} h={8} s={C.teal} dir="right" /></RoundButton>
                <RoundButton $small aria-label="提示设置">
                  <Ico w={9} h={9} s={C.teal} sw={2.5}><circle cx="4.500" cy="4.500" r="2.800" /></Ico>
                </RoundButton>
              </ActionRow>
            </ToastActions>
          </Toast>
        </Viewport>
      </Body>
      <BottomStrip />
    </Page>
  );
}
